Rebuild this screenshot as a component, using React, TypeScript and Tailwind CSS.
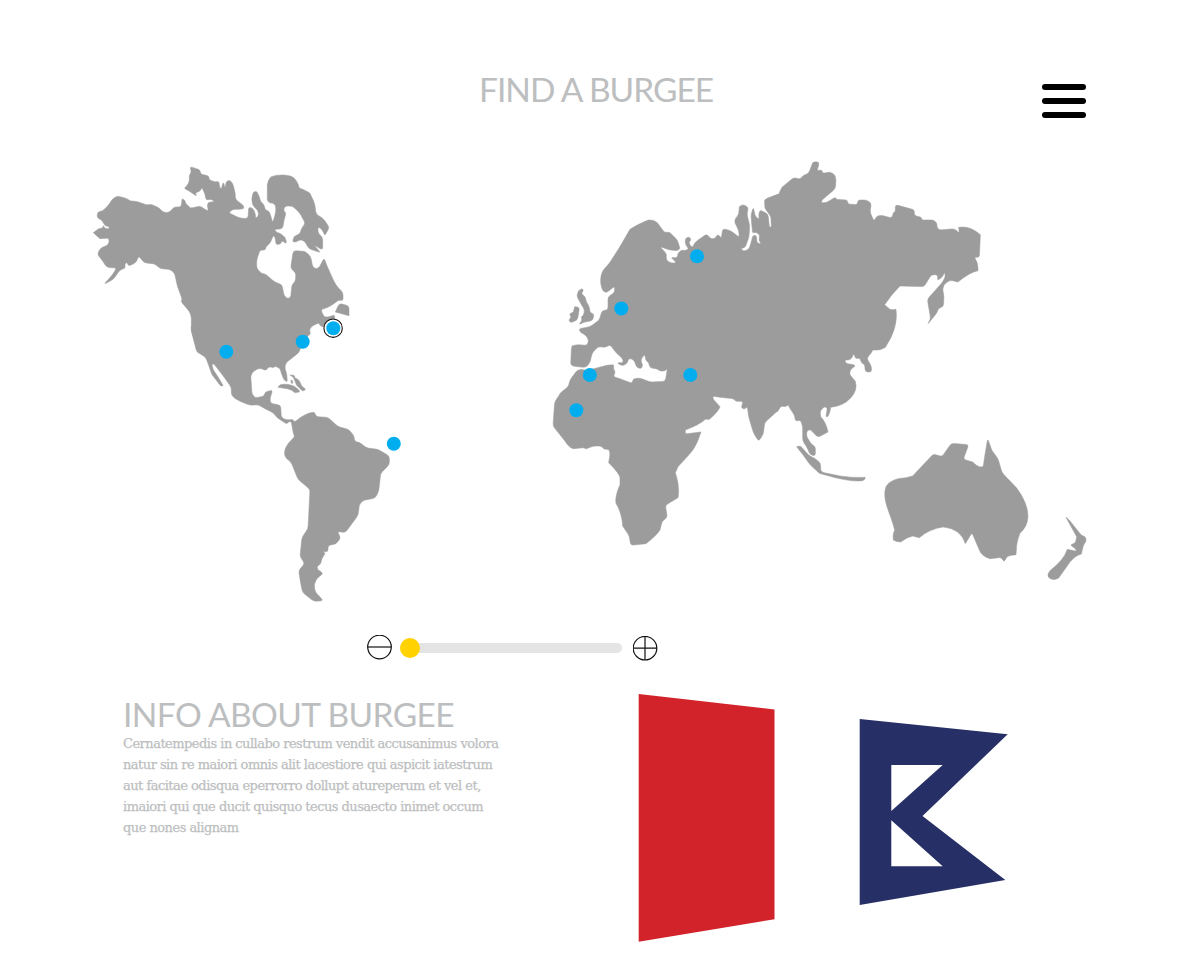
import React from "react";

type Pin = { x: number; y: number; active?: boolean };
type Land = { x: number; y: number; d: string };

const pins: Pin[] = [
  { x: 226.3, y: 351.7 },
  { x: 302.7, y: 341.7 },
  { x: 333.3, y: 328.2, active: true },
  { x: 393.8, y: 443.7 },
  { x: 621.3, y: 308.5 },
  { x: 697, y: 256.3 },
  { x: 589.8, y: 375 },
  { x: 690.3, y: 375 },
  { x: 576.3, y: 410.3 },
];

const lands: Land[] = [
  // Canada, Alaska and the northern United States
  {
    x: 80,
    y: 150,
    d: "M40 248 L56 236 L68 234 L70 226 L76 236 L88 236 L86 229 L76 228 L64 209 L52 204 L52 186 L68 183 L86 165 L95 150 L110 138 L140 145 L150 153 L170 154 L200 165 L214 163 L238 174 L248 186 L262 188 L272 183 L282 171 L302 171 L305 160 L306 146 L314 150 L318 162 L326 168 L330 174 L345 172 L360 168 L372 176 L386 184 L382 168 L384 158 L404 154 L394 148 L378 150 L376 136 L366 112 L360 124 L346 128 L350 138 L330 125 L312 115 L322 106 L328 94 L328 76 L334 66 L330 50 L344 54 L360 60 L362 72 L386 78 L388 90 L406 96 L416 94 L420 114 L424 116 L430 95 L436 116 L438 96 L448 90 L458 100 L466 130 L466 148 L490 166 L492 176 L476 178 L458 178 L446 188 L478 204 L504 206 L506 172 L518 174 L526 190 L527 206 L536 196 L534 182 L518 166 L515 146 L520 126 L530 124 L538 140 L542 155 L552 164 L556 180 L568 184 L574 204 L578 217 L584 200 L588 182 L586 162 L562 156 L562 105 Q564 88 574 80 Q588 74 612 75 Q636 77 642 84 L652 96 L658 114 Q680 122 690 130 L704 160 L708 192 L730 206 L748 232 L734 258 L728 240 L714 230 L714 250 L728 262 L728 300 L702 285 L722 308 L686 296 L676 276 L662 268 L648 276 L638 276 L642 258 L660 252 L664 236 L676 220 L660 190 L638 168 L616 168 L610 180 L618 190 L612 210 L608 236 L584 238 L588 246 L600 250 L616 262 L620 282 L606 272 L602 282 L588 284 L586 264 L580 256 L570 280 L558 290 L556 300 L540 300 L530 330 L530 355 L544 370 L556 372 L584 396 L606 404 L612 436 L622 446 L632 442 L636 404 L646 394 L648 370 L632 354 L640 302 L676 304 L692 320 L698 350 L708 357 L718 352 L732 324 L740 345 L758 386 L770 408 L789 428 L789 452 L776 450 L758 464 L740 474 L724 478 L726 488 L734 502 L750 500 L764 494 L764 512 L740 530 L722 530 L716 518 L694 530 L688 540 L692 552 L680 560 L660 598 L655 610 L360 610 L350 596 L334 545 L334 500 L328 484 L304 456 L306 446 L292 408 L284 370 L270 358 L240 356 L226 342 L192 338 L176 318 L168 338 L146 348 L140 336 L134 344 L136 354 L120 360 L100 388 L72 403 L96 376 L110 354 L80 352 L70 336 L52 312 L62 294 L86 284 L88 264 L60 266 Z M766 486 L778 460 L807 468 L807 497 Z",
  },
  // Southern United States, Central and South America, Caribbean
  {
    x: 180,
    y: 290,
    d: "M34 110 L34 118 L50 186 L66 194 L78 204 L84 220 L96 254 L122 288 L130 288 L116 264 L98 236 L96 222 L102 222 L130 258 L154 292 L154 312 L160 322 L176 332 L210 346 L234 344 L262 360 L280 368 L290 382 L302 390 L320 402 L328 394 L334 396 L340 430 L344 440 L332 452 L322 464 L314 480 L314 500 L334 518 L354 568 L390 598 L384 716 L366 742 L360 800 L374 820 L356 842 L362 880 L368 908 L402 934 L430 932 L406 906 L402 886 L410 866 L430 850 L412 838 L412 828 L422 822 L426 804 L436 790 L428 784 L444 786 L444 766 L468 762 L482 744 L472 724 L496 728 L534 676 L538 646 Q544 632 556 630 L586 624 L596 604 L602 550 L628 524 L628 498 L594 478 L560 474 L540 458 L524 454 L522 438 L506 418 L474 410 L444 382 L408 380 L404 366 L384 370 L362 382 L344 396 L338 388 L322 390 L304 384 L302 346 L272 340 L270 326 L278 300 L256 306 L252 318 L226 324 L216 312 L212 256 L222 242 L240 234 L258 242 L266 230 L282 233 L284 229 L300 234 L304 250 L312 270 L322 276 L320 250 L314 234 L318 218 L354 190 L358 178 L358 120 Z M294 292 L300 284 L318 282 L344 288 L362 306 L342 308 L338 302 L322 296 Z M340 262 L356 268 L366 290 L378 298 L368 304 L350 286 Z M330 255 L344 256 L344 265 Z M333 270 L338 272 L338 280 L334 280 Z",
  },
  // Europe, western Russia and the north coast of Africa
  {
    x: 540,
    y: 200,
    d: "M96 438 L110 434 L142 436 L146 420 L138 406 L120 396 L118 386 L150 380 L178 360 L186 332 L204 330 L204 290 L224 278 L224 258 L208 272 L198 278 L188 272 L182 252 L182 232 L188 212 L208 190 L240 140 L270 88 Q290 74 325 60 Q342 58 352 68 L374 98 L388 96 L412 120 L420 146 L412 152 L390 150 L360 140 L380 162 L378 180 L394 190 L410 188 L392 172 L412 174 L414 158 L426 150 L436 152 L446 146 L436 134 L436 116 L446 110 L454 118 L446 128 L456 144 L466 126 L500 102 L512 116 L524 116 L534 102 L544 116 L548 86 L572 92 L598 112 L596 92 L584 66 L586 56 L596 44 L598 20 Q612 8 624 24 L621 44 L629 76 L627 110 L616 142 L602 146 L612 154 L627 147 L636 118 L638 107 L649 106 L651 129 L664 132 L657 122 L659 103 L646 97 L638 99 L635 70 L633 44 L640 22 L646 50 L658 58 L656 44 L660 30 L684 42 L688 80 L694 82 L693 50 L674 24 L674 -2 L720 -20 L720 588 L56 588 L64 576 L84 564 L90 540 L112 510 L128 508 L140 512 L200 496 L222 494 L220 506 L226 516 L220 530 L240 536 L276 550 L280 536 L300 534 L330 546 L376 544 L382 506 L376 512 L362 514 L350 506 L330 504 L326 488 L318 482 L314 462 L302 480 L308 496 L304 506 L290 502 L282 480 L266 474 L262 490 L246 498 L230 488 L250 488 L248 476 L228 458 L210 434 L196 442 L174 440 L156 460 L150 488 L138 502 L108 500 L92 496 L94 450 Z M126 266 L130 270 L124 282 L136 290 L138 304 L148 320 L150 338 L162 342 L158 362 L134 366 L116 374 L126 362 L124 350 L130 346 L134 330 L122 310 L110 288 L116 272 Z M104 320 L118 322 L116 340 L112 360 L92 368 L86 360 L94 352 L88 342 L100 336 Z",
  },
  // Africa, Arabia and India
  {
    x: 540,
    y: 350,
    d: "M80 114 L64 126 L44 156 L39 228 L74 272 Q88 294 100 296 L132 293 L138 297 L160 288 L184 288 L192 298 L208 298 L210 314 L206 338 Q240 372 240 384 L240 404 Q224 440 228 460 Q246 490 248 528 L268 558 L272 586 L318 581 Q350 556 360 540 L366 514 L382 502 L376 466 L414 443 Q420 408 406 368 L414 350 Q452 310 460 298 Q472 280 483 246 L436 252 L436 240 Q476 226 496 208 L508 208 Q536 184 540 170 L520 148 L518 138 L540 142 L580 146 L588 154 L610 154 L604 172 L612 178 L622 170 L626 200 L640 248 L656 274 L670 252 L674 218 L720 176 L720 105 L88 105 Z",
  },
  // Siberia and the Russian far east
  {
    x: 720,
    y: 150,
    d: "M134 150 L174 144 Q178 124 186 112 L222 82 L240 88 L250 76 L266 70 L278 38 Q288 32 296 38 L296 48 L290 62 L306 60 L308 70 L330 66 L344 74 L348 88 L346 116 L306 150 L304 158 L318 158 L346 142 L350 148 L382 150 L384 162 L412 164 L414 150 L440 150 L454 160 L450 186 L462 214 L470 198 L484 196 L516 204 L520 188 L526 184 L526 164 L584 180 L582 196 L604 202 L606 210 L640 210 L650 218 L652 236 L662 240 L704 236 L718 250 L716 232 Q750 226 781 254 L778 322 L764 322 Q776 342 774 362 Q750 366 714 396 L690 390 L672 404 L668 418 L672 440 L670 470 L656 474 L650 490 L622 524 L632 506 L622 448 L668 396 L676 380 L674 366 L668 380 L652 392 L654 374 L634 374 L612 410 L540 408 Q512 436 494 464 L512 480 L528 478 Q536 532 496 592 L480 600 L160 600 L160 200 L140 176 Z",
  },
  // China, Indochina and Sumatra
  {
    x: 730,
    y: 310,
    d: "M140 100 L140 309 L152 288 L168 290 L174 284 L180 296 L194 316 L196 334 L212 330 L218 350 L218 392 L232 414 L240 434 L256 438 L256 410 L244 402 L230 380 L230 364 L240 358 L264 382 L294 366 Q288 336 272 320 L270 302 L284 290 L292 294 L288 320 L294 320 L300 304 L302 292 Q340 288 362 264 Q384 240 376 214 L358 192 L362 178 L378 166 L348 160 L344 150 L362 150 L372 130 L376 146 L390 144 L394 158 L404 164 L406 186 L425 186 L424 168 L410 144 L422 132 L430 116 L460 115 L470 105 L470 90 Z M200 410 L212 408 L236 436 L256 446 L272 460 L272 486 L330 498 Q370 504 406 502 Q406 510 398 512 Q360 518 268 490 L240 464 L220 436 Z",
  },
  // Australia and New Zealand
  {
    x: 870,
    y: 420,
    d: "M48 200 Q56 184 84 176 Q110 174 128 168 L190 102 L216 110 L244 70 L296 74 L280 118 L308 126 Q330 148 340 138 L344 110 L353 56 L366 92 L384 116 L396 158 L440 204 Q474 250 474 290 Q472 320 450 340 Q438 366 438 404 L412 408 L402 427 L394 412 L360 416 Q334 408 328 390 L306 338 L286 371 Q272 326 220 321 Q180 326 148 353 L128 348 Q110 352 92 366 Q78 366 70 360 L69 344 L74 330 C62 280 34 238 48 200 Z M588 292 L596 298 L634 346 L646 350 L649 362 L640 376 L634 402 Q610 408 590 440 L566 474 Q548 484 536 472 Q530 464 540 452 Q582 420 592 388 L620 394 L616 386 L600 374 L616 370 L620 350 Z",
  },
];

const cornerRadius = 8;

/** Rounds every corner of a path that lies between two straight segments. */
function roundCorners(d: string): string {
  const commands = (d.match(/[MLQCZ][^MLQCZ]*/g) ?? []).map((part) => ({
    type: part[0],
    nums: part.slice(1).trim().split(/\s+/).filter(Boolean).map(Number),
  }));
  return commands
    .map((cmd, i) => {
      const prev = commands[i - 1];
      const next = commands[i + 1];
      if (cmd.type !== "L" || !prev || !next || next.type !== "L") {
        return `${cmd.type}${cmd.nums.join(" ")}`;
      }
      const [px, py] = prev.nums.slice(-2);
      const [x, y] = cmd.nums;
      const [nx, ny] = next.nums;
      const before = Math.hypot(px - x, py - y);
      const after = Math.hypot(nx - x, ny - y);
      const r = Math.min(cornerRadius, before * 0.45, after * 0.45);
      const ax = x + ((px - x) * r) / before;
      const ay = y + ((py - y) * r) / before;
      const bx = x + ((nx - x) * r) / after;
      const by = y + ((ny - y) * r) / after;
      return `L${ax.toFixed(1)} ${ay.toFixed(1)}Q${x} ${y} ${bx.toFixed(1)} ${by.toFixed(1)}`;
    })
    .join("");
}

const infoLines = [
  "Cernatempedis in cullabo restrum vendit accusanimus volora",
  "natur sin re maiori omnis alit lacestiore qui aspicit iatestrum",
  "aut facitae odisqua eperrorro dollupt atureperum et vel et,",
  "imaiori qui que ducit quisquo tecus dusaecto inimet occum",
  "que nones alignam",
];

function WorldMap() {
  return (
    <svg className="block h-[460px] w-[1020px]" viewBox="80 150 1020 460" role="img">
      <g fill="#9c9c9c" stroke="#9c9c9c" strokeWidth="1.6" strokeLinejoin="round">
        {lands.map((land) => (
          <path
            key={`${land.x}-${land.y}`}
            transform={`translate(${land.x} ${land.y}) scale(0.33333)`}
            d={roundCorners(land.d)}
          />
        ))}
      </g>
      {pins.map((pin) => (
        <g key={`${pin.x}-${pin.y}`}>
          {pin.active && <circle cx={pin.x - 0.2} cy={pin.y} r="9.2" fill="#fff" stroke="#111" strokeWidth="1.1" />}
          <circle cx={pin.x} cy={pin.y} r="7" fill="#00aeef" />
        </g>
      ))}
    </svg>
  );
}

function ZoomSlider() {
  return (
    <div className="ml-[367px] mt-6 flex h-[27px] w-[291px] items-center">
      <button className="-mt-px size-[25px]" aria-label="Zoom out">
        <svg viewBox="0 0 25 25" fill="none" stroke="#111" strokeWidth="1.2">
          <circle cx="12.5" cy="12" r="11.8" />
          <path d="M.7 12h23.6" />
        </svg>
      </button>
      <div className="relative ml-2 h-5 w-[222px] py-[5px]">
        <div className="h-[10px] rounded-full bg-[#e4e4e4]" />
        <span className="absolute left-0 top-0 size-5 rounded-full bg-[#ffd200]" />
      </div>
      <button className="ml-[11px] mt-px size-[25px]" aria-label="Zoom in">
        <svg viewBox="0 0 25 25" fill="none" stroke="#111" strokeWidth="1.2">
          <circle cx="12" cy="12.2" r="11.8" />
          <path d="M.2 12.2h23.6M12 .4v23.6" />
        </svg>
      </button>
    </div>
  );
}

export default function App() {
  return (
    <main className="h-[960px] w-[1200px] overflow-hidden bg-white font-['Lato',sans-serif] text-[#bcbec0]">
      <header className="flex h-[150px] items-start pl-[479px] pr-[114px] pt-[69px]">
        <h1 className="w-[240px] whitespace-nowrap text-[33.5px] leading-10 tracking-[-1px]">FIND A BURGEE</h1>
        <button className="ml-auto mt-[15px] flex w-11 flex-col gap-2" aria-label="Menu">
          <span className="h-1.5 w-full rounded-full bg-black" />
          <span className="h-1.5 w-full rounded-full bg-black" />
          <span className="h-1.5 w-full rounded-full bg-black" />
        </button>
      </header>
      <div className="pl-20">
        <WorldMap />
      </div>
      <ZoomSlider />
      <section className="flex pl-[123px] pt-[33px]">
        <article className="w-[515px]">
          <h2 className="whitespace-nowrap text-[33.5px] leading-10 tracking-[-0.6px]">INFO ABOUT BURGEE</h2>
          <p className="-mt-px whitespace-nowrap font-['DejaVu_Serif',serif] text-[13px] leading-[21px] tracking-[-0.52px] [-webkit-text-stroke:0.25px_#bcbec0]">
            {infoLines.map((line) => (
              <span key={line} className="block">{line}</span>
            ))}
          </p>
        </article>
        <svg className="h-[248px] w-[137px]" viewBox="638 694 137 248">
          <path d="M638.7 694L774.5 709.5V919.3L638.7 941.7Z" fill="#d2232a" />
        </svg>
        <svg className="ml-[84px] mt-[25px] h-[187px] w-[149px]" viewBox="859 719 149 187">
          <path fillRule="evenodd" d="M859.7 719L1007.7 734.3L922.5 816L1005.3 880L859.7 905ZM891.3 765V811L942.7 765ZM891.3 820.2V866.3H942.7Z" fill="#262f66" />
        </svg>
      </section>
    </main>
  );
}
